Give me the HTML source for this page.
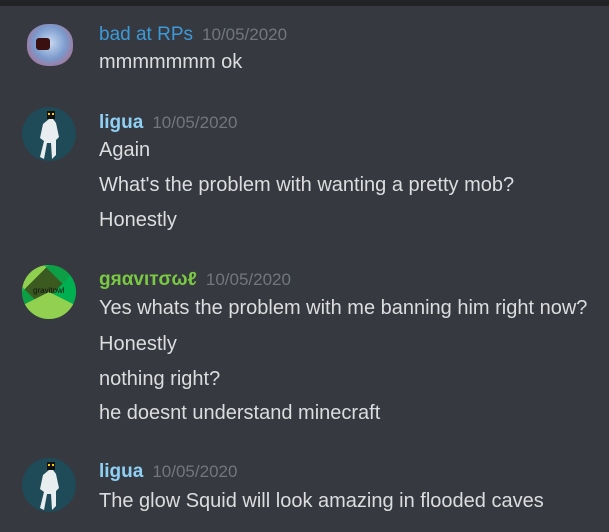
<!DOCTYPE html><html><head><style>
body{margin:0;width:609px;height:532px;background:#36393f;overflow:hidden;position:relative;font-family:"Liberation Sans",sans-serif}
.bar{position:absolute;left:0;top:0;width:609px;height:6px;background:#222327}
.t{position:absolute;left:99px;color:#dcddde;font-size:20px;white-space:nowrap;line-height:24px}
.n{position:absolute;left:99px;font-size:19px;line-height:24px;white-space:nowrap}
.n span{color:#72767d;font-size:17px;margin-left:9px}
.av{position:absolute;left:22px;width:54px;height:54px;border-radius:50%;overflow:hidden}
</style></head><body>
<div class="bar"></div>
<div style="position:absolute;left:27px;top:24px;width:46px;height:42px;border-radius:45%;background:radial-gradient(circle at 50% 45%,#c8d8f0,#7a9acc 50%,#a07aa0 75%,transparent 78%)"><div style="position:absolute;left:9px;top:14px;width:14px;height:12px;background:#3a1010;border-radius:3px"></div></div>
<div class="n" style="top:23px;color:#3d9ad9">bad at RPs<span>10/05/2020</span></div>
<div class="t" style="top:50px">mmmmmmm ok</div>

<div class="av" style="top:107px;background:#1f4a57"><svg width="54" height="54"><path d="M27 12 L31 12 L34 16 L37 30 L34 33 L34 48 L30 52 L29 36 L25 36 L22 52 L18 50 L22 34 L18 31 L21 17Z" fill="#e8eef0"/><rect x="25" y="4" width="8" height="8" fill="#111"/><rect x="26" y="6" width="2" height="2" fill="#fc0"/><rect x="30" y="6" width="2" height="2" fill="#fc0"/></svg></div>
<div class="n" style="top:111px;color:#8fd0f5;font-weight:bold">ligua<span style="font-weight:normal">10/05/2020</span></div>
<div class="t" style="top:138px">Again</div>
<div class="t" style="top:173px">What's the problem with wanting a pretty mob?</div>
<div class="t" style="top:208px">Honestly</div>

<div class="av" style="top:265px;background:linear-gradient(135deg,#8fd050 0 25%,#3a5a20 25% 55%,#00b050 55% 100%)"><div style="position:absolute;left:0;top:0;width:54px;height:54px;background:linear-gradient(45deg,#00b050 0 30%,transparent 30% 70%,#00b050 70%);opacity:.8"></div><div style="position:absolute;left:0;top:27px;width:54px;height:27px;background:#92d050;clip-path:polygon(0 50%,50% 0,100% 50%,100% 100%,0 100%)"></div><div style="position:absolute;left:11px;top:21px;font-size:8px;color:#111">gravitowl</div></div>
<div class="n" style="top:268px;color:#7ac943;font-weight:bold">gяαvιтσωℓ<span style="font-weight:normal">10/05/2020</span></div>
<div class="t" style="top:296px">Yes whats the problem with me banning him right now?</div>
<div class="t" style="top:332px">Honestly</div>
<div class="t" style="top:367px">nothing right?</div>
<div class="t" style="top:401px">he doesnt understand minecraft</div>

<div class="av" style="top:458px;background:#1f4a57"><svg width="54" height="54"><path d="M27 12 L31 12 L34 16 L37 30 L34 33 L34 48 L30 52 L29 36 L25 36 L22 52 L18 50 L22 34 L18 31 L21 17Z" fill="#e8eef0"/><rect x="25" y="4" width="8" height="8" fill="#111"/><rect x="26" y="6" width="2" height="2" fill="#fc0"/><rect x="30" y="6" width="2" height="2" fill="#fc0"/></svg></div>
<div class="n" style="top:460px;color:#8fd0f5;font-weight:bold">ligua<span style="font-weight:normal">10/05/2020</span></div>
<div class="t" style="top:489px">The glow Squid will look amazing in flooded caves</div>
</body></html>
